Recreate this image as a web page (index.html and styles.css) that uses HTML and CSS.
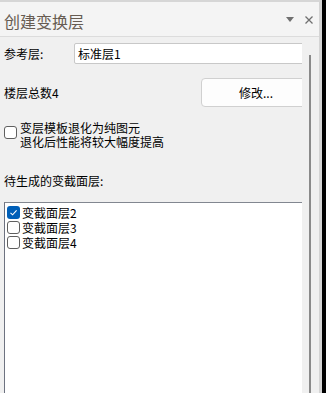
FILE: index.html
```html
<!DOCTYPE html>
<html lang="zh">
<head>
    <meta charset="UTF-8">
    <meta name="viewport" content="width=device-width, initial-scale=1.0">
    <title>创建变换层</title>
    <link rel="stylesheet" href="styles.css">
</head>
<body>
    <div class="window">
        <div class="panel">
            <div class="titlebar">
                <span class="title">创建变换层</span>
                <span class="tools">
                    <svg class="menu-arrow" width="8" height="5" viewBox="0 0 8 5"><path d="M0 0 L8 0 L4 5 Z" fill="#707070"/></svg>
                    <svg class="close" width="8" height="8" viewBox="0 0 8 8"><path d="M0.5 0.5 L7.5 7.5 M7.5 0.5 L0.5 7.5" stroke="#707070" stroke-width="1.3"/></svg>
                </span>
            </div>
            <div class="body">
                <div class="content">
                    <div class="form">
                        <div class="ref-row">
                            <span class="label">参考层:</span>
                            <div class="input">标准层1</div>
                        </div>
                        <div class="floor-row">
                            <span class="label">楼层总数4</span>
                            <button class="btn">修改...</button>
                        </div>
                        <div class="check-row">
                            <span class="cb"></span>
                            <span class="check-text">变层模板退化为纯图元<br>退化后性能将较大幅度提高</span>
                        </div>
                        <div class="section-label">待生成的变截面层:</div>
                        <div class="listbox">
                            <div class="item">
                                <span class="cb checked">
                                    <svg width="13" height="13" viewBox="0 0 13 13"><path d="M3.5 6.8 L5.6 8.8 L9.6 4.4" fill="none" stroke="#fff" stroke-width="1.1"/></svg>
                                </span>
                                <span>变截面层2</span>
                            </div>
                            <div class="item"><span class="cb"></span><span>变截面层3</span></div>
                            <div class="item"><span class="cb"></span><span>变截面层4</span></div>
                        </div>
                    </div>
                </div>
                <div class="scroll"><div class="thumb"></div></div>
            </div>
        </div>
        <div class="edge"></div>
    </div>
</body>
</html>
```

FILE: styles.css
```css
body {
    margin: 0;
    padding: 0;
    background-color: #000;
    font-family: "Noto Sans CJK SC", "Noto Sans", sans-serif;
    font-size: 12px;
    color: #000;
    overflow: hidden;
}
.window {
    display: flex;
    width: 326px;
    height: 393px;
}
.panel {
    width: 319px;
    border-top: 2px solid #d6d6d6;
    border-right: 3px solid #d4d4d4;
    background-color: #f0f0f0;
    display: flex;
    flex-direction: column;
}
.edge {
    flex: 1;
    background-color: #000;
}
.titlebar {
    height: 34px;
    border-bottom: 1px solid #dcdcdc;
    background-color: #f4f4f4;
    display: flex;
    align-items: center;
    justify-content: space-between;
    padding: 0 0 0 4px;
}
.title {
    font-size: 16px;
    line-height: 20px;
    color: #675c52;
    margin-top: 3px;
}
.tools {
    display: flex;
    align-items: center;
    gap: 11px;
    padding-right: 6px;
    margin-top: 1px;
}
.body {
    flex: 1;
    display: flex;
    min-height: 0;
}
.content {
    width: 302px;
    overflow: hidden;
}
.form {
    width: 340px;
    padding-left: 4px;
    display: flex;
    flex-direction: column;
    height: 100%;
}
.scroll {
    width: 17px;
    background-color: #f0f0f0;
    padding-top: 18px;
    display: flex;
    justify-content: center;
}
.thumb {
    width: 2px;
    background-color: #8a8a8a;
    margin-left: -1px;
}
.label {
    line-height: 16px;
}
.ref-row {
    margin-top: 6px;
    display: grid;
    grid-template-columns: 70px 1fr;
    align-items: center;
}
.input {
    height: 19px;
    border: 1px solid #c8c8c8;
    border-radius: 2px 0 0 2px;
    background-color: #fff;
    line-height: 19px;
    padding-left: 3px;
}
.floor-row {
    margin-top: 14px;
    display: grid;
    grid-template-columns: 197px 110px;
    align-items: center;
}
.btn {
    height: 29px;
    border: 1px solid #d0d0d0;
    border-radius: 4px;
    background-color: #fdfdfd;
    font-family: inherit;
    font-size: 12px;
    color: #000;
    padding: 0;
}
.check-row {
    margin-top: 14px;
    display: flex;
    align-items: flex-start;
    gap: 3px;
}
.check-row .cb {
    margin-top: 5px;
}
.check-text {
    line-height: 13.5px;
}
.cb {
    width: 11px;
    height: 11px;
    border: 1px solid #5f5f5f;
    border-radius: 3px;
    background-color: #fff;
    flex-shrink: 0;
    display: block;
}
.cb.checked {
    width: 13px;
    height: 13px;
    border: none;
    background-color: #005fb8;
}
.cb svg {
    display: block;
}
.section-label {
    margin-top: 25px;
    line-height: 16px;
}
.listbox {
    margin-top: 13px;
    flex: 1;
    border-top: 1px solid #828790;
    border-left: 1px solid #6d7280;
    background-color: #fff;
    padding: 2px 0 0 2px;
}
.item {
    height: 15px;
    display: flex;
    align-items: center;
    gap: 2px;
    line-height: 15px;
}
```
